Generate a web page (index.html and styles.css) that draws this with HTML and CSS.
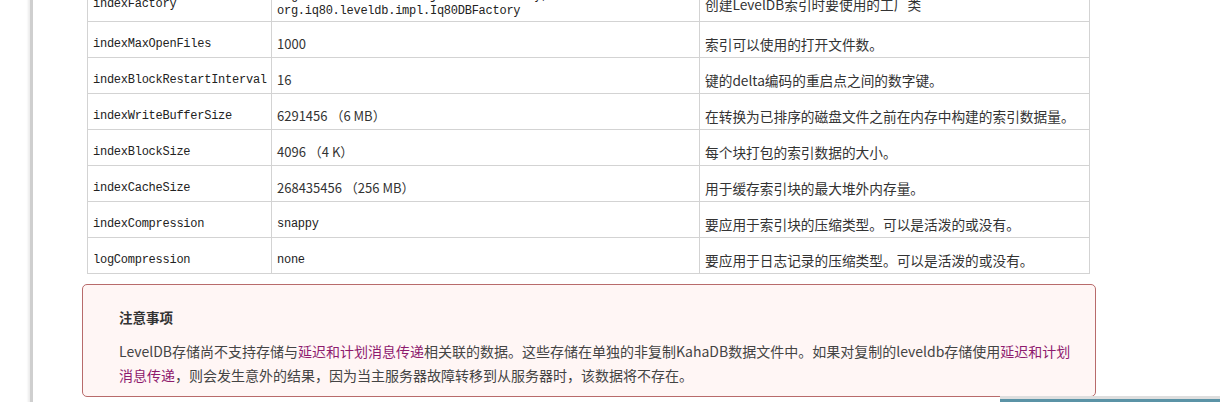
FILE: index.html
```html
<!DOCTYPE html>
<html lang="zh-CN">

<head>
    <meta charset="UTF-8">
    <meta name="viewport" content="width=device-width, initial-scale=1.0">
    <title>LevelDB Store 配置</title>
    <link rel="stylesheet" href="styles.css">
</head>

<body>
    <div class="page">
        <div class="content">
            <table class="config">
                <colgroup>
                    <col class="col-name">
                    <col class="col-value">
                    <col class="col-desc">
                </colgroup>
                <tr class="first">
                    <td class="name">indexFactory</td>
                    <td class="mono">org.fusesource.leveldbjni.JniDBFactory,<br>org.iq80.leveldb.impl.Iq80DBFactory</td>
                    <td class="desc">创建LevelDB索引时要使用的工厂类</td>
                </tr>
                <tr>
                    <td class="name">indexMaxOpenFiles</td>
                    <td class="value">1000</td>
                    <td class="desc">索引可以使用的打开文件数。</td>
                </tr>
                <tr>
                    <td class="name">indexBlockRestartInterval</td>
                    <td class="value">16</td>
                    <td class="desc">键的delta编码的重启点之间的数字键。</td>
                </tr>
                <tr>
                    <td class="name">indexWriteBufferSize</td>
                    <td class="value">6291456 （6 MB）</td>
                    <td class="desc">在转换为已排序的磁盘文件之前在内存中构建的索引数据量。</td>
                </tr>
                <tr>
                    <td class="name">indexBlockSize</td>
                    <td class="value">4096 （4 K）</td>
                    <td class="desc">每个块打包的索引数据的大小。</td>
                </tr>
                <tr>
                    <td class="name">indexCacheSize</td>
                    <td class="value">268435456 （256 MB）</td>
                    <td class="desc">用于缓存索引块的最大堆外内存量。</td>
                </tr>
                <tr>
                    <td class="name">indexCompression</td>
                    <td class="mono">snappy</td>
                    <td class="desc">要应用于索引块的压缩类型。可以是活泼的或没有。</td>
                </tr>
                <tr>
                    <td class="name">logCompression</td>
                    <td class="mono">none</td>
                    <td class="desc">要应用于日志记录的压缩类型。可以是活泼的或没有。</td>
                </tr>
            </table>

            <div class="note">
                <p class="note-title">注意事项</p>
                <p class="note-text">LevelDB存储尚不支持存储与<a href="#">延迟和计划消息传递</a>相关联的数据。这些存储在单独的非复制KahaDB数据文件中。如果对复制的leveldb存储使用<a href="#">延迟和计划消息传递</a>，则会发生意外的结果，因为当主服务器故障转移到从服务器时，该数据将不存在。</p>
            </div>
        </div>
    </div>

    <div class="taskbar"></div>
</body>

</html>
```

FILE: styles.css
```css
body {
    margin: 0;
    background-color: #fff;
    font-family: "Noto Sans CJK SC", "Noto Sans", sans-serif;
    color: #333;
    overflow: hidden;
}

.page {
    margin-left: 30px;
    margin-top: -16px;
    border-left: 3px solid #cfcfcf;
    box-shadow: -2px 0 2px #ececec;
    padding-left: 49px;
    min-height: 440px;
}

.content {
    width: 1014px;
}

.config {
    border-collapse: collapse;
    table-layout: fixed;
    margin: 0 5px;
    width: 1003px;
    border: 1px solid #cccccc;
}

.col-name {
    width: 184px;
}

.col-value {
    width: 428px;
}

.col-desc {
    width: 390px;
}

.config td {
    border: 1px solid #d3d3d3;
    padding: 14px 4px 5px 5px;
    line-height: 16px;
    vertical-align: middle;
    text-align: left;
    white-space: nowrap;
    overflow: hidden;
}

.config tr.first td {
    padding: 4px 4px 2px 5px;
    line-height: 15px;
}

.config .name,
.config .mono {
    font-family: "Liberation Mono", monospace;
    font-size: 12px;
    letter-spacing: -0.25px;
    color: #222;
}

.config .value {
    font-size: 13px;
    color: #333;
}

.config .desc {
    font-size: 13.7px;
    color: #333;
}

.note {
    margin-top: 10px;
    border: 1px solid #b86b6b;
    border-radius: 5px;
    background-color: #fff6f5;
    padding: 22px 14px 9px 36px;
}

.note-title {
    margin: 0 0 12px;
    font-size: 13.5px;
    font-weight: bold;
    line-height: 20px;
    color: #333;
}

.note-text {
    margin: 0;
    font-size: 14px;
    line-height: 24px;
    color: #444;
}

.note-text a {
    color: #8e1a6e;
    text-decoration: none;
}

.taskbar {
    position: fixed;
    left: 1000px;
    right: 0;
    bottom: 0;
    height: 3px;
    border-top: 3px solid #dedede;
    background-color: #5b93a6;
}
```
